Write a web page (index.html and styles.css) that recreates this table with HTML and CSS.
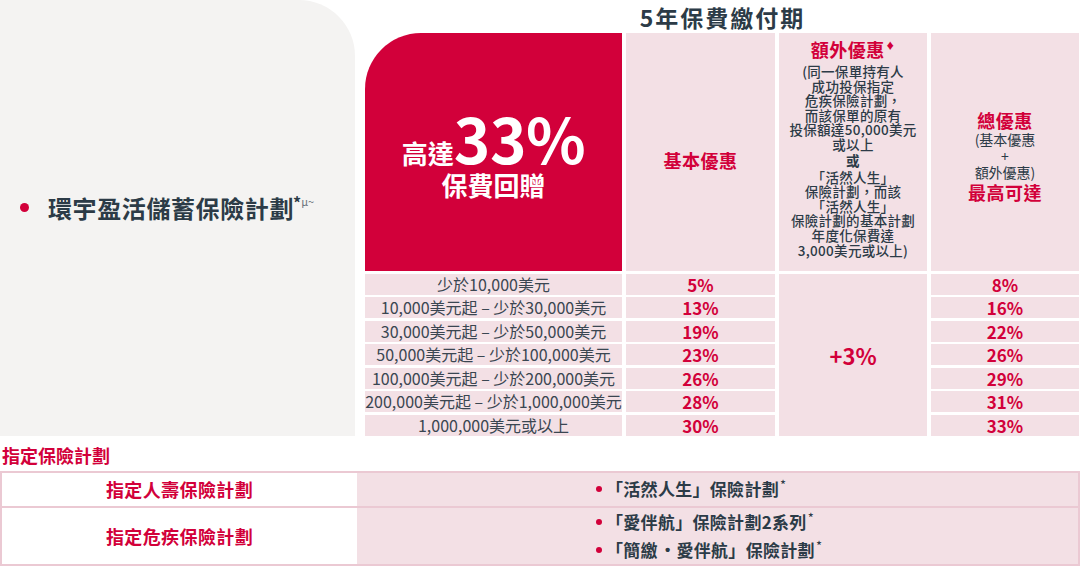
FILE: index.html
```html
<!DOCTYPE html>
<html lang="zh-Hant">
<head>
<meta charset="utf-8">
<title>環宇盈活儲蓄保險計劃</title>
<link rel="stylesheet" href="styles.css">
</head>
<body>
<div class="page">
  <section class="top">
    <div class="plan-panel">
      <div class="plan-name"><span class="dot"></span><span class="plan-text">環宇盈活儲蓄保險計劃</span><span class="marks">*<span class="marks-sm">μ~</span></span></div>
    </div>
    <div class="offer">
      <h2 class="period">5年保費繳付期</h2>
      <div class="grid">
        <div class="hero">
          <div class="hero-line1"><span class="hero-small">高達</span><span class="hero-big">33%</span></div>
          <div class="hero-small hero-line2">保費回贈</div>
        </div>
        <div class="head head-basic"><span class="red-title">基本優惠</span></div>
        <div class="head head-extra">
          <span class="red-title">額外優惠<span class="diamond">♦</span></span>
          <div class="body-text">
            <div>(同一保單持有人</div>
            <div>成功投保指定</div>
            <div>危疾保險計劃，</div>
            <div>而該保單的原有</div>
            <div>投保額達50,000美元</div>
            <div>或以上</div>
            <div class="or">或</div>
            <div>「活然人生」</div>
            <div>保險計劃，而該</div>
            <div>「活然人生」</div>
            <div>保險計劃的基本計劃</div>
            <div>年度化保費達</div>
            <div>3,000美元或以上)</div>
          </div>
        </div>
        <div class="head head-total">
          <span class="red-title">總優惠</span>
          <span class="sm">(基本優惠</span>
          <span class="sm">+</span>
          <span class="sm">額外優惠)</span>
          <span class="red-title">最高可達</span>
        </div>

        <div class="extra-val">+3%</div>

        <div class="range">少於10,000美元</div>
        <div class="val">5%</div>
        <div class="val">8%</div>

        <div class="range">10,000美元起 – 少於30,000美元</div>
        <div class="val">13%</div>
        <div class="val">16%</div>

        <div class="range">30,000美元起 – 少於50,000美元</div>
        <div class="val">19%</div>
        <div class="val">22%</div>

        <div class="range">50,000美元起 – 少於100,000美元</div>
        <div class="val">23%</div>
        <div class="val">26%</div>

        <div class="range">100,000美元起 – 少於200,000美元</div>
        <div class="val">26%</div>
        <div class="val">29%</div>

        <div class="range">200,000美元起 – 少於1,000,000美元</div>
        <div class="val">28%</div>
        <div class="val">31%</div>

        <div class="range">1,000,000美元或以上</div>
        <div class="val">30%</div>
        <div class="val">33%</div>
      </div>
    </div>
  </section>

  <section class="designated">
    <h3 class="des-title">指定保險計劃</h3>
    <div class="des-table">
      <div class="des-row des-row-1">
        <div class="des-name">指定人壽保險計劃</div>
        <div class="des-plans">
          <ul class="plan-list">
            <li><span class="bullet"></span>「活然人生」保險計劃<span class="ast">*</span></li>
          </ul>
        </div>
      </div>
      <div class="des-row des-row-2">
        <div class="des-name">指定危疾保險計劃</div>
        <div class="des-plans">
          <ul class="plan-list">
            <li><span class="bullet"></span>「愛伴航」保險計劃2系列<span class="ast">*</span></li>
            <li><span class="bullet"></span>「簡繳<span class="mid-dot">•</span>愛伴航」保險計劃<span class="ast">*</span></li>
          </ul>
        </div>
      </div>
    </div>
  </section>
</div>
</body>
</html>
```

FILE: styles.css
```css
* {
  box-sizing: border-box;
}

body {
  margin: 0;
  background: #ffffff;
  font-family: "Noto Sans CJK TC", "Noto Sans", sans-serif;
  color: #2c3b47;
}

.page {
  width: 1080px;
  height: 567px;
  overflow: hidden;
}

/* ---------- top section ---------- */
.top {
  display: flex;
  height: 435.5px;
}

.plan-panel {
  width: 355px;
  flex: none;
  background: #f4f3f2;
  border-top-right-radius: 56px;
  display: flex;
  align-items: center;
  padding-left: 20px;
  padding-bottom: 20px;
}

.plan-name {
  display: flex;
  align-items: center;
  font-size: 24px;
  font-weight: 700;
  letter-spacing: 0.6px;
  color: #2c3b47;
}

.dot {
  width: 9px;
  height: 9px;
  border-radius: 50%;
  background: #d2003a;
  margin-right: 19px;
}

.marks {
  align-self: flex-start;
  font-size: 16px;
  line-height: 20px;
  font-weight: 700;
  letter-spacing: 0;
  color: #2c3b47;
  margin-top: 2px;
  margin-left: -1px;
}

.marks-sm {
  font-size: 11px;
  font-weight: 400;
  color: #6b757d;
  vertical-align: top;
  position: relative;
  top: -1px;
}

.offer {
  margin-left: 10px;
  width: 715px;
}

.period {
  margin: 0;
  height: 33px;
  font-size: 23px;
  line-height: 35px;
  font-weight: 700;
  text-align: center;
  letter-spacing: 2px;
  color: #2c3b47;
}

.grid {
  display: grid;
  grid-template-columns: 257px 149px 148px 148px;
  grid-template-rows: 238px repeat(7, 21px);
  column-gap: 4px;
  row-gap: 2.5px;
}

.hero {
  background: #d2003a;
  border-top-left-radius: 56px;
  color: #ffffff;
  display: flex;
  flex-direction: column;
  align-items: center;
  justify-content: center;
  padding-top: 6px;
}

.hero-line1 {
  display: flex;
  align-items: baseline;
  height: 52px;
  line-height: 52px;
}

.hero-small {
  font-size: 26px;
  font-weight: 700;
}

.hero-big {
  font-size: 62px;
  font-weight: 700;
  letter-spacing: -0.5px;
}

.hero-line2 {
  line-height: 30px;
  margin-top: 7px;
}

.head {
  background: #f3e0e5;
  display: flex;
  flex-direction: column;
  align-items: center;
  text-align: center;
}

.red-title {
  color: #d2003a;
  font-size: 18px;
  font-weight: 700;
  line-height: 22px;
  letter-spacing: 0.5px;
}

.head-basic {
  justify-content: center;
  padding-top: 16px;
}

.head-extra {
  padding-top: 5px;
}

.diamond {
  font-size: 9px;
  vertical-align: top;
  position: relative;
  top: -3px;
  margin-left: 1px;
}

.body-text {
  margin-top: 4px;
  font-size: 13.5px;
  font-weight: 500;
  line-height: 14.6px;
  letter-spacing: 0.3px;
  color: #2c3b47;
  white-space: nowrap;
}

.body-text .or {
  font-weight: 700;
  margin: 1.5px 0 2px;
}

.head-total {
  justify-content: center;
  padding-top: 8px;
}

.sm {
  font-size: 14px;
  font-weight: 400;
  line-height: 16.5px;
  color: #2c3b47;
}

.range {
  background: #f3e0e5;
  font-size: 16px;
  line-height: 21px;
  text-align: center;
  color: #3a4651;
  white-space: nowrap;
}

.val {
  background: #f3e0e5;
  color: #d2003a;
  font-weight: 700;
  font-size: 17px;
  line-height: 21px;
  text-align: center;
}

.extra-val {
  grid-column: 3;
  grid-row: 2 / span 7;
  background: #f3e0e5;
  color: #d2003a;
  font-weight: 700;
  font-size: 22px;
  display: flex;
  align-items: center;
  justify-content: center;
}

/* ---------- designated plans ---------- */
.designated {
  padding-top: 7px;
}

.des-title {
  margin: 0 0 4px 2px;
  font-size: 18px;
  line-height: 24px;
  font-weight: 700;
  color: #d2003a;
}

.des-table {
  border: 2px solid #ebc9d3;
}

.des-row {
  display: grid;
  grid-template-columns: 355px 1fr;
}

.des-row-1 {
  height: 33px;
}

.des-row-2 {
  height: 58px;
  border-top: 2px solid #ebc9d3;
}

.des-name {
  background: #ffffff;
  display: flex;
  align-items: center;
  justify-content: center;
  font-size: 18px;
  font-weight: 700;
  color: #d2003a;
  letter-spacing: 0.4px;
}

.des-plans {
  background: #f3e0e5;
  display: flex;
  align-items: center;
  padding-left: 239px;
}

.plan-list {
  list-style: none;
  margin: 0;
  padding: 0;
}

.plan-list li {
  display: flex;
  align-items: center;
  font-size: 17px;
  font-weight: 700;
  line-height: 28px;
  color: #2c3b47;
  letter-spacing: 0.3px;
}

.bullet {
  width: 6px;
  height: 6px;
  border-radius: 50%;
  background: #d2003a;
  margin-right: 4px;
}

.mid-dot {
  font-family: "Liberation Sans", sans-serif;
  font-size: 15px;
  margin: 0 6px 0 7px;
}

.ast {
  align-self: flex-start;
  font-size: 13px;
  line-height: 20px;
  font-weight: 400;
  margin-left: 1px;
}
```
